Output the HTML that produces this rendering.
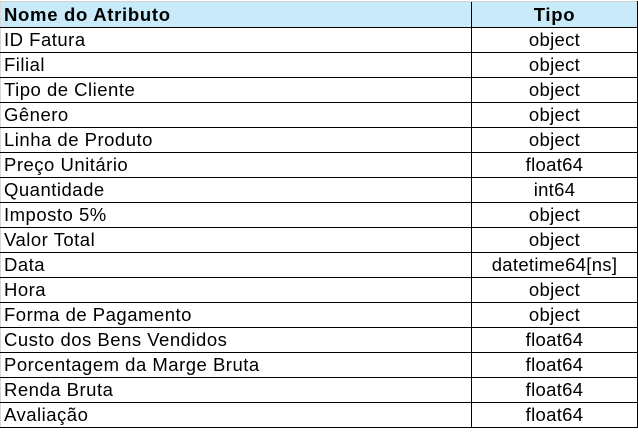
<!DOCTYPE html>
<html><head><style>
body{margin:0;background:#fff;width:638px;height:439px;overflow:hidden;font-family:"Liberation Sans",Arial,sans-serif;}
table{border-collapse:collapse;position:absolute;left:0;top:1px;}
td{height:24px;padding:0 0 0 3px;font-size:18.5px;letter-spacing:0.5px;line-height:24px;border-bottom:1px solid #000;color:#000;white-space:nowrap;}
td.t{text-align:center;padding:0;border-left:1px solid #000;border-right:1px solid #000;width:165px;letter-spacing:0.3px;}
td.n{width:467px;border-left:1px solid #d8d8d8;}
tr.h td{background:#c9ebf9;font-weight:bold;height:25px;border-top:1px solid #d0d0d0;letter-spacing:0.7px;}
</style></head><body>
<table>
<tr class="h"><td class="n">Nome do Atributo</td><td class="t">Tipo</td></tr>
<tr><td class="n">ID Fatura</td><td class="t">object</td></tr>
<tr><td class="n">Filial</td><td class="t">object</td></tr>
<tr><td class="n">Tipo de Cliente</td><td class="t">object</td></tr>
<tr><td class="n">Gênero</td><td class="t">object</td></tr>
<tr><td class="n">Linha de Produto</td><td class="t">object</td></tr>
<tr><td class="n">Preço Unitário</td><td class="t">float64</td></tr>
<tr><td class="n">Quantidade</td><td class="t">int64</td></tr>
<tr><td class="n">Imposto 5%</td><td class="t">object</td></tr>
<tr><td class="n">Valor Total</td><td class="t">object</td></tr>
<tr><td class="n">Data</td><td class="t">datetime64[ns]</td></tr>
<tr><td class="n">Hora</td><td class="t">object</td></tr>
<tr><td class="n">Forma de Pagamento</td><td class="t">object</td></tr>
<tr><td class="n">Custo dos Bens Vendidos</td><td class="t">float64</td></tr>
<tr><td class="n">Porcentagem da Marge Bruta</td><td class="t">float64</td></tr>
<tr><td class="n">Renda Bruta</td><td class="t">float64</td></tr>
<tr><td class="n">Avaliação</td><td class="t">float64</td></tr>
</table>
</body></html>
